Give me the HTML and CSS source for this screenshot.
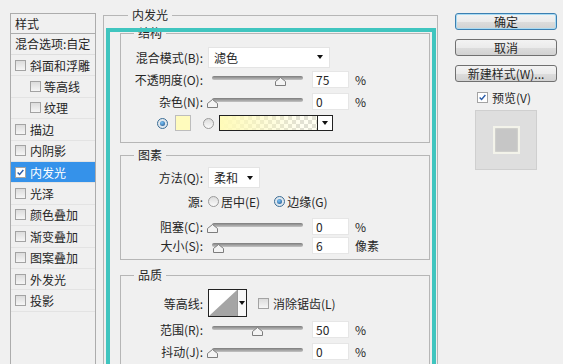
FILE: index.html
```html
<!DOCTYPE html>
<html lang="zh-CN">
<head>
    <meta charset="UTF-8">
    <title>图层样式 - 内发光</title>
    <link rel="stylesheet" href="styles.css">
</head>
<body>
    <div class="dialog">
        <!-- Style list -->
        <div class="style-list">
            <div class="list-head">样式</div>
            <div class="list-blend">混合选项:自定</div>
            <div class="list-row"><span class="check"></span>斜面和浮雕</div>
            <div class="list-row sub"><span class="check"></span>等高线</div>
            <div class="list-row sub"><span class="check"></span>纹理</div>
            <div class="list-row"><span class="check"></span>描边</div>
            <div class="list-row"><span class="check"></span>内阴影</div>
            <div class="list-row selected"><span class="check"><svg viewBox="0 0 11 11"><path d="M2 5.5 4.4 8 9 2.5"/></svg></span>内发光</div>
            <div class="list-row"><span class="check"></span>光泽</div>
            <div class="list-row"><span class="check"></span>颜色叠加</div>
            <div class="list-row"><span class="check"></span>渐变叠加</div>
            <div class="list-row"><span class="check"></span>图案叠加</div>
            <div class="list-row"><span class="check"></span>外发光</div>
            <div class="list-row"><span class="check"></span>投影</div>
        </div>

        <!-- Inner glow settings -->
        <fieldset class="panel">
            <legend>内发光</legend>

            <fieldset class="group group-structure">
                <legend>结构</legend>
                <div class="row">
                    <span class="label">混合模式(B):</span>
                    <div class="select select-blend">滤色<span class="arrow"></span></div>
                </div>
                <div class="row">
                    <span class="label">不透明度(O):</span>
                    <div class="slider"><span class="track"></span><svg class="thumb" style="left:68px" viewBox="0 0 11 9"><polygon points="0.5,8.5 0.5,4.5 5.5,0.5 10.5,4.5 10.5,8.5"/></svg></div>
                    <div class="field">75</div>
                    <span class="unit">%</span>
                </div>
                <div class="row">
                    <span class="label">杂色(N):</span>
                    <div class="slider"><span class="track"></span><svg class="thumb" style="left:0" viewBox="0 0 11 9"><polygon points="0.5,8.5 0.5,4.5 5.5,0.5 10.5,4.5 10.5,8.5"/></svg></div>
                    <div class="field">0</div>
                    <span class="unit">%</span>
                </div>
                <div class="row color-row">
                    <span class="radio on"></span>
                    <span class="swatch"></span>
                    <span class="radio radio-gradient"></span>
                    <div class="gradient-box">
                        <span class="gradient-fill"></span>
                        <span class="gradient-drop"><span class="arrow"></span></span>
                    </div>
                </div>
            </fieldset>

            <fieldset class="group group-elements">
                <legend>图素</legend>
                <div class="row row-method">
                    <span class="label">方法(Q):</span>
                    <div class="select select-method">柔和<span class="arrow"></span></div>
                </div>
                <div class="row row-source">
                    <span class="label">源:</span>
                    <span class="radio"></span><span class="option">居中(E)</span>
                    <span class="radio radio-edge on"></span><span class="option">边缘(G)</span>
                </div>
                <div class="row row-choke">
                    <span class="label">阻塞(C):</span>
                    <div class="slider"><span class="track"></span><svg class="thumb" style="left:0" viewBox="0 0 11 9"><polygon points="0.5,8.5 0.5,4.5 5.5,0.5 10.5,4.5 10.5,8.5"/></svg></div>
                    <div class="field">0</div>
                    <span class="unit">%</span>
                </div>
                <div class="row row-size">
                    <span class="label">大小(S):</span>
                    <div class="slider"><span class="track"></span><svg class="thumb" style="left:6px" viewBox="0 0 11 9"><polygon points="0.5,8.5 0.5,4.5 5.5,0.5 10.5,4.5 10.5,8.5"/></svg></div>
                    <div class="field">6</div>
                    <span class="unit">像素</span>
                </div>
            </fieldset>

            <fieldset class="group group-quality">
                <legend>品质</legend>
                <div class="row row-contour">
                    <span class="label">等高线:</span>
                    <div class="contour">
                        <svg class="contour-curve" viewBox="0 0 28 26" preserveAspectRatio="none"><polygon points="0,26 28,0 28,26"/></svg>
                        <span class="contour-drop"><span class="arrow"></span></span>
                    </div>
                    <span class="check check-aa"></span><span class="option">消除锯齿(L)</span>
                </div>
                <div class="row">
                    <span class="label">范围(R):</span>
                    <div class="slider"><span class="track"></span><svg class="thumb" style="left:45px" viewBox="0 0 11 9"><polygon points="0.5,8.5 0.5,4.5 5.5,0.5 10.5,4.5 10.5,8.5"/></svg></div>
                    <div class="field">50</div>
                    <span class="unit">%</span>
                </div>
                <div class="row">
                    <span class="label">抖动(J):</span>
                    <div class="slider"><span class="track"></span><svg class="thumb" style="left:0" viewBox="0 0 11 9"><polygon points="0.5,8.5 0.5,4.5 5.5,0.5 10.5,4.5 10.5,8.5"/></svg></div>
                    <div class="field">0</div>
                    <span class="unit">%</span>
                </div>
            </fieldset>
        </fieldset>

        <!-- Buttons and preview -->
        <div class="side">
            <div class="btn btn-default">确定</div>
            <div class="btn">取消</div>
            <div class="btn">新建样式(W)...</div>
            <div class="preview-toggle">
                <span class="check"><svg viewBox="0 0 11 11"><path d="M2 5.5 4.4 8 9 2.5"/></svg></span>预览(V)
            </div>
            <div class="preview">
                <div class="preview-square"></div>
            </div>
        </div>
    </div>

    <!-- annotation frame -->
    <div class="highlight"></div>
</body>
</html>
```

FILE: styles.css
```css
/* General */
body {
    margin: 0;
    width: 563px;
    height: 364px;
    overflow: hidden;
    background-color: #f0f0f0;
    font-family: "Noto Sans CJK SC", "Microsoft YaHei", sans-serif;
    font-size: 12px;
    color: #262626;
    position: relative;
}

.dialog {
    display: flex;
    align-items: flex-start;
    height: 364px;
    overflow: hidden;
}

/* Style list */
.style-list {
    margin: 13px 0 0 10px;
    width: 86px;
    height: 351px;
    box-sizing: border-box;
    border: 1px solid #acacac;
    border-bottom: none;
    background-color: #f0f0f0;
}

.list-head {
    height: 19px;
    line-height: 19px;
    padding-left: 4px;
    border-bottom: 1px solid #acacac;
}

.list-blend {
    height: 20px;
    line-height: 20px;
    padding-left: 4px;
    border-bottom: 1px solid #dedede;
    white-space: nowrap;
}

.list-row {
    height: 20.4px;
    display: flex;
    align-items: center;
    gap: 4px;
    padding-left: 4px;
    border-bottom: 1px solid #e3e3e3;
    white-space: nowrap;
}

.list-row.sub {
    padding-left: 19px;
    gap: 3px;
}

.list-row.selected {
    background-color: #3592ea;
    color: #fff;
}

/* Checkbox */
.check {
    width: 11px;
    height: 11px;
    box-sizing: border-box;
    border: 1px solid #a3a3a3;
    background: linear-gradient(#dcdcdc, #f6f6f6);
    display: inline-block;
    flex-shrink: 0;
}

.check svg {
    display: block;
    width: 9px;
    height: 9px;
    background-color: #fff;
}

.check path {
    fill: none;
    stroke: #2a5ca8;
    stroke-width: 1.7;
}

/* Main panel */
.panel {
    margin: 7px 0 0 7px;
    width: 335px;
    height: 357px;
    box-sizing: border-box;
    padding: 0 7px 0 16px;
    border: 1px solid #b6b6b6;
    border-bottom: none;
    min-inline-size: 0;
    overflow: hidden;
}

.panel > legend {
    margin-left: 8px;
    padding: 0 4px;
    line-height: 16px;
}

.group {
    margin: 0;
    padding: 0;
    border: 1px solid #b6b6b6;
    min-inline-size: 0;
}

.group > legend {
    margin-left: 13px;
    padding: 0 4px;
    line-height: 16px;
}

.group-structure {
    margin-top: 2px;
    padding: 5px 0 8px;
}

.group-elements {
    margin-top: 4px;
    padding: 3px 0 4px;
}

.group-quality {
    margin-top: 7px;
    padding: 5px 0 10px;
}

/* Rows */
.row {
    height: 22px;
    display: flex;
    align-items: center;
    white-space: nowrap;
}

.row-method {
    height: 23px;
}

.row-source {
    height: 24px;
}

.row-choke {
    height: 20px;
    margin-top: 3px;
}

.row-size {
    height: 19px;
}

.row-contour {
    height: 30px;
}

.label {
    width: 82px;
    text-align: right;
    flex-shrink: 0;
}

/* Select */
.select {
    margin-left: 5px;
    height: 21px;
    box-sizing: border-box;
    background-color: #fff;
    border: 1px solid #e4e4e4;
    padding-left: 5px;
    line-height: 19px;
    display: flex;
    align-items: center;
    justify-content: space-between;
    padding-right: 6px;
}

.select-blend {
    width: 122px;
}

.select-method {
    width: 52px;
}

.arrow {
    width: 0;
    height: 0;
    border-left: 3.5px solid transparent;
    border-right: 3.5px solid transparent;
    border-top: 4px solid #111;
}

/* Slider */
.slider {
    position: relative;
    margin: 4px 0 0 4px;
    width: 102px;
    height: 14px;
    flex-shrink: 0;
}

.track {
    position: absolute;
    left: 5px;
    top: 2px;
    width: 91px;
    height: 4px;
    border-radius: 2px;
    background: linear-gradient(#7c7c7c, #c4c4c4);
}

.thumb {
    position: absolute;
    top: 3px;
    width: 11px;
    height: 9px;
}

.thumb polygon {
    fill: #f4f4f4;
    stroke: #7d7d7d;
}

/* Number field */
.field {
    margin-left: 3px;
    width: 37px;
    height: 17px;
    box-sizing: border-box;
    background-color: #fff;
    border: 1px solid #e6e6e6;
    padding: 0 3px;
    line-height: 15px;
    flex-shrink: 0;
}

.unit {
    margin-left: 6px;
}

/* Radio */
.radio {
    width: 11px;
    height: 11px;
    box-sizing: border-box;
    border-radius: 50%;
    border: 1px solid #9a9a9a;
    background: linear-gradient(#dcdcdc, #fbfbfb);
    flex-shrink: 0;
    display: flex;
    align-items: center;
    justify-content: center;
}

.radio.on {
    border-color: #3b6d95;
    background: #dfe7ee;
}

.radio.on::after {
    content: "";
    width: 5px;
    height: 5px;
    border-radius: 50%;
    background: radial-gradient(circle at 40% 35%, #7cc4f8, #1b4f86);
}

.option {
    margin-left: 2px;
}

.row-source .radio {
    margin-left: 5px;
}

.row-source .radio-edge {
    margin-left: 14px;
}

/* Color row */
.color-row .radio.on {
    margin-left: 36px;
}

.swatch {
    margin-left: 7px;
    width: 16px;
    height: 16px;
    box-sizing: border-box;
    border: 1px solid #bdbdbd;
    background-color: #fffbbd;
}

.radio-gradient {
    margin-left: 12px;
}

.gradient-box {
    margin-left: 5px;
    width: 114px;
    height: 16px;
    box-sizing: border-box;
    border: 1px solid #222;
    display: flex;
}

.gradient-fill {
    flex: 1;
    background:
        linear-gradient(to right, #fffbb9, rgba(255, 251, 185, 0.2) 85%),
        conic-gradient(#dadada 25%, #fff 0 50%, #dadada 0 75%, #fff 0) 0 0 / 8px 8px;
}

.gradient-drop {
    width: 14px;
    border-left: 1px solid #222;
    background-color: #fff;
    display: flex;
    align-items: center;
    justify-content: center;
}

/* Contour */
.contour {
    margin-left: 5px;
    width: 39px;
    height: 28px;
    box-sizing: border-box;
    border: 1px solid #222;
    display: flex;
    background-color: #fff;
}

.contour-curve {
    width: 28px;
    height: 26px;
}

.contour-curve polygon {
    fill: #a5a5a5;
}

.contour-drop {
    flex: 1;
    border-left: 1px solid #9a9a9a;
    display: flex;
    align-items: center;
    justify-content: center;
    background-color: #f7f7f7;
}

.check-aa {
    margin-left: 11px;
}

.row-contour .option {
    margin-left: 4px;
}

/* Side buttons */
.side {
    margin: 13px 0 0 17px;
    width: 102px;
    display: flex;
    flex-direction: column;
}

.btn {
    height: 17px;
    box-sizing: border-box;
    margin-bottom: 9px;
    border: 1px solid #707070;
    border-radius: 3px;
    background: linear-gradient(#f3f3f3, #ebebeb 50%, #dddddd 51%, #d2d2d2);
    text-align: center;
    line-height: 15px;
    white-space: nowrap;
}

.btn-default {
    border-color: #3c7fb1;
    box-shadow: inset 0 0 0 1px #a9dbf3;
}

.preview-toggle {
    margin: -1px 0 0 22px;
    height: 14px;
    display: flex;
    align-items: center;
    gap: 4px;
}

.preview {
    margin: 6px 0 0 20px;
    width: 62px;
    height: 60px;
    box-sizing: border-box;
    border: 1px solid #cfcfcf;
    background-color: #dedede;
    display: flex;
    align-items: center;
    justify-content: center;
}

.preview-square {
    width: 27px;
    height: 28px;
    box-sizing: border-box;
    border: 2px solid #f3f3ea;
    background-color: #c6c6c6;
    box-shadow: inset 0 0 2px #e8e8dc;
}

/* Annotation frame */
.highlight {
    position: absolute;
    left: 106px;
    top: 28px;
    width: 330px;
    height: 336px;
    box-sizing: border-box;
    border: 4px solid #40c5bf;
    border-bottom: none;
    pointer-events: none;
}
```
